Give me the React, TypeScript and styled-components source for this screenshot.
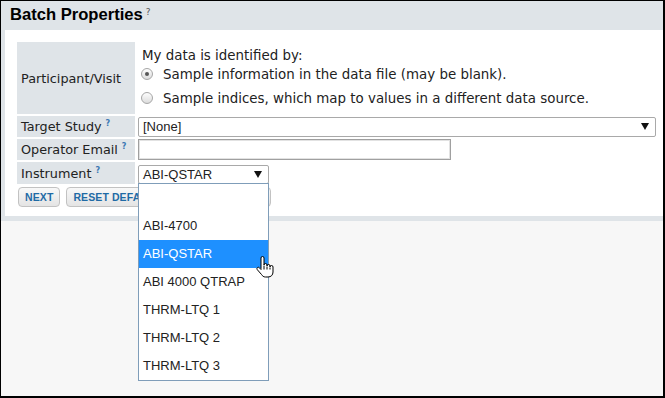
import React from "react";
import styled, { createGlobalStyle } from "styled-components";

const GlobalStyle = createGlobalStyle`
  html, body { margin: 0; padding: 0; }
  body { background: #f7f7f7; }
  * { box-sizing: border-box; }
`;

const Frame = styled.div`
  position: relative;
  width: 665px;
  height: 398px;
  background: #f7f7f7;
  border-top: 1px solid #000;
  border-left: 1px solid #000;
  border-right: 2px solid #000;
  border-bottom: 2px solid #000;
  overflow: hidden;
`;

const Panel = styled.section`
  background: #dfe4e8;
  padding: 0 0 5px 4px;
`;

const Header = styled.h1`
  margin: 0 0 0 -4px;
  height: 29px;
  padding: 4px 0 0 9px;
  font-family: "Liberation Sans", Arial, sans-serif;
  font-weight: bold;
  font-size: 16.6px;
  line-height: 20px;
  color: #000;
`;

const Help = styled.sup<{ $blue?: boolean }>`
  font-family: "DejaVu Sans", Verdana, sans-serif;
  font-size: ${(p) => (p.$blue ? "8px" : "9px")};
  font-weight: ${(p) => (p.$blue ? "bold" : "normal")};
  color: ${(p) => (p.$blue ? "#3c78b4" : "#555")};
  margin-left: ${(p) => (p.$blue ? "4px" : "3px")};
  vertical-align: top;
  position: relative;
  top: -3px;
`;

const Body = styled.div`
  background: #fff;
  padding: 12px 7px 9px 12px;
`;

const Form = styled.div`
  display: grid;
  grid-template-columns: 118px 1fr;
  grid-template-rows: 72px 21px 21px 22px;
  column-gap: 3px;
  row-gap: 2px;
`;

const Label = styled.div`
  background: #dfe4e8;
  display: flex;
  align-items: center;
  padding-left: 4px;
  font-family: "DejaVu Sans", Verdana, sans-serif;
  font-size: 12.8px;
  color: #222;
  white-space: nowrap;
`;

const Value = styled.div<{ $align?: string }>`
  display: flex;
  align-items: ${(p) => p.$align || "center"};
  position: relative;
`;

const RadioGroup = styled.div`
  display: flex;
  flex-direction: column;
  padding: 5px 0 0 3px;
  font-family: "DejaVu Sans", Verdana, sans-serif;
  font-size: 13.4px;
  color: #222;
`;

const Intro = styled.div`
  line-height: 17px;
  padding-left: 1px;
`;

const RadioRow = styled.label`
  display: flex;
  align-items: center;
  height: 20px;
  gap: 10px;
  white-space: nowrap;
  & + & {
    margin-top: 4px;
  }
`;

const Radio = styled.span<{ $checked?: boolean }>`
  flex: none;
  width: 12px;
  height: 12px;
  border-radius: 50%;
  border: 1px solid #a6a6a6;
  background: linear-gradient(#fdfdfd, #dcdcdc);
  display: flex;
  align-items: center;
  justify-content: center;
  &::after {
    content: "";
    display: ${(p) => (p.$checked ? "block" : "none")};
    width: 4px;
    height: 4px;
    border-radius: 50%;
    background: #555;
  }
`;

const SelectBox = styled.div<{ $width?: string; $height?: string }>`
  position: relative;
  width: ${(p) => p.$width || "100%"};
  height: ${(p) => p.$height || "20px"};
  border: 1px solid #a9a9a9;
  border-radius: 2px;
  background: #fff;
  display: flex;
  align-items: center;
  justify-content: space-between;
  padding: 0 6px 0 4px;
  font-family: "Liberation Sans", Arial, sans-serif;
  font-size: 13px;
  color: #222;
`;

const Arrow = styled.span`
  width: 0;
  height: 0;
  border-left: 4px solid transparent;
  border-right: 4px solid transparent;
  border-top: 7px solid #111;
`;

const TextInput = styled.div`
  width: 313px;
  height: 21px;
  border: 1px solid #a0a0a0;
  box-shadow: inset 0 0 0 1px #e2e2e2;
  background: #fff;
`;

const Buttons = styled.div`
  display: flex;
  gap: 6px;
  margin-top: 3px;
  padding-left: 1px;
`;

const Button = styled.button`
  height: 20px;
  padding: 0 6px;
  border: 1px solid #c2c2c2;
  border-radius: 4px;
  background: linear-gradient(#f8f8f8, #e4e4e4);
  font-family: "Liberation Sans", Arial, sans-serif;
  font-weight: bold;
  font-size: 10.5px;
  color: #1f6aa5;
  text-transform: uppercase;
  letter-spacing: 0.1px;
`;

const ListBox = styled.ul`
  position: absolute;
  left: -1px;
  top: 100%;
  margin: 0;
  padding: 0;
  list-style: none;
  width: 131px;
  border: 1px solid #7f9db9;
  background: #fff;
  z-index: 10;
`;

const Option = styled.li<{ $selected?: boolean }>`
  position: relative;
  height: 28px;
  line-height: 28px;
  padding-left: 4px;
  font-family: "Liberation Sans", Arial, sans-serif;
  font-size: 13px;
  color: ${(p) => (p.$selected ? "#fff" : "#222")};
  background: ${(p) => (p.$selected ? "#1e90ff" : "#fff")};
  white-space: nowrap;
`;

const Cursor = styled.svg`
  position: absolute;
  left: 117px;
  top: 16px;
  z-index: 11;
`;

const HandCursor = () => (
  <Cursor width="18" height="22" viewBox="0 0 18 22">
    <path
      d="M5 12.5 V2 a1.5 1.5 0 0 1 3 0 V9 a1.5 1.5 0 0 1 3 0 V10 a1.5 1.5 0 0 1 3 0 V11 a1.5 1.5 0 0 1 3 0 V16 c0 3 -2 5 -5 5 H9.5 c-2 0 -3 -1 -4 -2.5 L1.3 13.7 a1.4 1.4 0 0 1 2.1 -1.9 L5 13.5 Z"
      fill="#fff"
      stroke="#000"
      strokeWidth="1"
      strokeLinejoin="round"
    />
    <path d="M8 9.5 V13.5 M11 10.5 V13.5 M14 11.5 V13.5" stroke="#000" strokeWidth="1" />
  </Cursor>
);

const instruments = [
  "",
  "ABI-4700",
  "ABI-QSTAR",
  "ABI 4000 QTRAP",
  "THRM-LTQ 1",
  "THRM-LTQ 2",
  "THRM-LTQ 3",
];

export default function App() {
  return (
    <>
      <GlobalStyle />
      <Frame>
        <Panel>
          <Header>
            Batch Properties<Help>?</Help>
          </Header>
          <Body>
            <Form>
              <Label>Participant/Visit</Label>
              <RadioGroup>
                <Intro>My data is identified by:</Intro>
                <RadioRow>
                  <Radio $checked />
                  Sample information in the data file (may be blank).
                </RadioRow>
                <RadioRow>
                  <Radio />
                  Sample indices, which map to values in a different data source.
                </RadioRow>
              </RadioGroup>

              <Label>
                Target Study<Help $blue>?</Help>
              </Label>
              <Value>
                <SelectBox>
                  <span>[None]</span>
                  <Arrow />
                </SelectBox>
              </Value>

              <Label>
                Operator Email<Help $blue>?</Help>
              </Label>
              <Value>
                <TextInput />
              </Value>

              <Label>
                Instrument<Help $blue>?</Help>
              </Label>
              <Value $align="flex-end">
                <SelectBox $width="131px" $height="19px">
                  <span>ABI-QSTAR</span>
                  <Arrow />
                  <ListBox>
                    {instruments.map((name, i) => (
                      <Option key={i} $selected={name === "ABI-QSTAR"}>
                        {name}
                        {name === "ABI-QSTAR" && <HandCursor />}
                      </Option>
                    ))}
                  </ListBox>
                </SelectBox>
              </Value>
            </Form>
            <Buttons>
              <Button>Next</Button>
              <Button>Reset Defaults</Button>
              <Button>Save &amp; Finish</Button>
            </Buttons>
          </Body>
        </Panel>
      </Frame>
    </>
  );
}
